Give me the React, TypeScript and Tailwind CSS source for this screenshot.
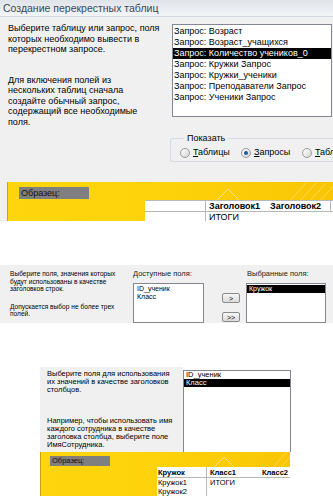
import React from 'react';

const queries = [
  'Запрос: Возраст',
  'Запрос: Возраст_учащихся',
  'Запрос: Количество учеников_0',
  'Запрос: Кружки Запрос',
  'Запрос: Кружки_ученики',
  'Запрос: Преподаватели Запрос',
  'Запрос: Ученики Запрос',
];

const Radio: React.FC<{ checked?: boolean; accel: string; rest: string }> = ({ checked, accel, rest }) => (
  <div className="flex w-[61px] shrink-0 items-center gap-[3px]">
    <span className="flex h-[10px] w-[10px] shrink-0 items-center justify-center rounded-full border border-[#9a9a9a] bg-gradient-to-br from-[#ffffff] to-[#d6d6d6]">
      {checked && <span className="h-[4px] w-[4px] rounded-full bg-[#1f5aa6]" />}
    </span>
    <span className="whitespace-nowrap">
      <span className="underline">{accel}</span>
      {rest}
    </span>
  </div>
);

const Decor: React.FC<{ x: number; y: number; s: number }> = ({ x, y, s }) => (
  <svg className="pointer-events-none absolute inset-0 h-full w-full" preserveAspectRatio="none">
    <polyline
      points={`${x - 14 * s},${y + 14 * s} ${x},${y} ${x + 14 * s},${y + 14 * s}`}
      fill="none"
      stroke="#fff"
      strokeOpacity="0.45"
      strokeWidth="1"
    />
    <line x1={x + 60 * s} y1={y + 14 * s} x2={x + 78 * s} y2={y - 6 * s} stroke="#fff" strokeOpacity="0.3" />
    <line x1={x + 70 * s} y1={y + 14 * s} x2={x + 88 * s} y2={y - 6 * s} stroke="#fff" strokeOpacity="0.3" />
    <line x1={x + 80 * s} y1={y + 14 * s} x2={x + 98 * s} y2={y - 6 * s} stroke="#fff" strokeOpacity="0.3" />
    <line x1={x + 90 * s} y1={y + 14 * s} x2={x + 108 * s} y2={y - 6 * s} stroke="#fff" strokeOpacity="0.3" />
  </svg>
);

export default function App() {
  return (
    <div className="flex h-[496px] w-[333px] flex-col overflow-hidden bg-white font-['Liberation_Sans','DejaVu_Sans',sans-serif] text-black">
      {/* Wizard 1: choose table or query */}
      <section className="flex h-[221px] shrink-0 flex-col overflow-hidden bg-[#f0f0f0]">
        <div className="h-[17px] shrink-0 border-b border-[#d3d9e0] bg-gradient-to-b from-[#dfe4ea] to-[#f3f5f7] pl-[3px] text-[10.5px] leading-[16px] text-[#3a4858]">
          Создание перекрестных таблиц
        </div>
        <div className="flex">
          <div className="w-[172px] shrink-0 pl-[8px] pt-[6px] text-[9px] leading-[10.5px]">
            <p>
              Выберите таблицу или запрос, поля
              <br />
              которых необходимо вывести в
              <br />
              перекрестном запросе.
            </p>
            <p className="mt-[20px]">
              Для включения полей из
              <br />
              нескольких таблиц сначала
              <br />
              создайте обычный запрос,
              <br />
              содержащий все необходимые
              <br />
              поля.
            </p>
          </div>
          <ul className="mt-[7px] h-[93px] w-[160px] shrink-0 border border-[#828790] bg-white pt-[1px] text-[9px] leading-[11px]">
            {queries.map((q, i) => (
              <li key={q} className={`whitespace-nowrap pl-[1px] ${i === 2 ? 'bg-black text-white' : ''}`}>
                {q}
              </li>
            ))}
          </ul>
        </div>
        <fieldset className="ml-[170px] mt-[6px] rounded-l-[3px] border border-r-0 border-[#d5dbe0] pb-[3px] pl-[9px] pt-[3px] text-[9px] leading-[11px]">
          <legend className="ml-[4px] px-[3px] text-[9px] leading-[11px]">Показать</legend>
          <div className="flex">
            <Radio accel="Т" rest="аблицы" />
            <Radio checked accel="З" rest="апросы" />
            <Radio accel="Т" rest="абл" />
          </div>
        </fieldset>
        <div className="relative ml-[7px] mt-[20px] flex h-[49px] flex-col border-l border-[#c9a21a] bg-gradient-to-r from-[#ffd60d] via-[#fdd20a] to-[#f9c505]">
          <Decor x={220} y={7} s={1} />
          <div className="relative ml-[11px] mt-[5px] h-[12px] w-[70px] bg-[#7f7f7f] pl-[2px] text-[9px] leading-[12px] text-[#111]">
            Образец:
          </div>
          <div className="relative ml-[137px] mt-[1px] flex-1 border-t border-[#b8b8b8] bg-white text-[9px] leading-[10px]">
            <div className="flex h-[11px] border-b border-[#b8b8b8]">
              <div className="w-[61px] shrink-0 border-r border-[#b8b8b8]" />
              <div className="w-[62px] shrink-0 pl-[3px] font-bold">Заголовок1</div>
              <div className="w-[63px] shrink-0 border-r border-[#b8b8b8] pl-[2px] font-bold">Заголовок2</div>
            </div>
            <div className="flex h-[11px] border-b border-[#e0e0e0]">
              <div className="w-[61px] shrink-0 border-r border-[#b8b8b8]" />
              <div className="pl-[3px]">ИТОГИ</div>
            </div>
            <div className="flex h-[10px]">
              <div className="w-[61px] shrink-0 border-r border-[#b8b8b8]" />
            </div>
          </div>
        </div>
      </section>

      {/* Wizard 2: row headings */}
      <section className="mt-[44px] flex h-[58px] shrink-0 overflow-hidden bg-[#f0f0f0] text-[6.6px] leading-[7.5px]">
        <div className="w-[133px] shrink-0 pl-[10px] pt-[5px]">
          <p>
            Выберите поля, значения которых
            <br />
            будут использованы в качестве
            <br />
            заголовков строк.
          </p>
          <p className="mt-[10px]">
            Допускается выбор не более трех
            <br />
            полей.
          </p>
        </div>
        <div className="flex w-[71px] shrink-0 flex-col pt-[4px]">
          <div className="text-[7.5px] leading-[9px] text-[#222]">Доступные поля:</div>
          <ul className="mt-[5px] flex-1 border border-[#828790] bg-white pl-[3px] pt-[1px] text-[7px] leading-[8px]">
            <li>ID_ученик</li>
            <li>Класс</li>
          </ul>
        </div>
        <div className="ml-[18px] flex w-[18px] shrink-0 flex-col pt-[28px]">
          <button className="flex h-[10px] items-center justify-center rounded-[2px] border border-[#8a8a8a] bg-gradient-to-b from-[#f6f6f6] to-[#dcdcdc] text-[7px] leading-none">
            &gt;
          </button>
          <button className="mt-[9px] flex h-[10px] items-center justify-center rounded-[2px] border border-[#8a8a8a] bg-gradient-to-b from-[#f6f6f6] to-[#dcdcdc] text-[7px] leading-none">
            &gt;&gt;
          </button>
        </div>
        <div className="ml-[6px] flex w-[80px] shrink-0 flex-col pt-[4px]">
          <div className="pl-[1px] text-[7.5px] leading-[9px] text-[#222]">Выбранные поля:</div>
          <ul className="mt-[5px] flex-1 border border-[#828790] bg-white pt-[1px] text-[7px] leading-[8px]">
            <li className="bg-black pl-[2px] text-white">Кружок</li>
          </ul>
        </div>
      </section>

      {/* Wizard 3: column headings */}
      <section className="ml-[40px] mt-[44px] flex w-[251px] shrink-0 flex-col text-[7.5px] leading-[8px]">
        <div className="flex h-[85px]">
          <div className="w-[143px] shrink-0 bg-[#f0f0f0] pl-[7px] pt-[3px]">
            <p>
              Выберите поля для использования
              <br />
              их значений в качестве заголовков
              <br />
              столбцов.
            </p>
            <p className="mt-[23px]">
              Например, чтобы использовать имя
              <br />
              каждого сотрудника в качестве
              <br />
              заголовка столбца, выберите поле
              <br />
              ИмяСотрудника.
            </p>
          </div>
          <ul className="mt-[3px] h-[82px] w-[108px] shrink-0 border border-b-0 border-[#828790] bg-white">
            <li className="pl-[2px]">ID_ученик</li>
            <li className="bg-black pl-[2px] text-white">Класс</li>
          </ul>
        </div>
        <div className="relative flex h-[44px] w-[250px] flex-col border-l border-[#c9a21a] bg-gradient-to-r from-[#ffd60d] via-[#fdd20a] to-[#f9c505]">
          <Decor x={183} y={5} s={0.8} />
          <div className="relative ml-[9px] mt-[4px] h-[10px] w-[60px] bg-[#7f7f7f] pl-[2px] leading-[10px] text-[#111]">
            Образец:
          </div>
          <div className="relative ml-[116px] mt-[1px] flex-1 bg-white">
            <div className="flex h-[11px] border-b border-[#b8b8b8] font-bold leading-[11px]">
              <div className="w-[50px] shrink-0 border-r border-[#b8b8b8] pl-[1px]">Кружок</div>
              <div className="w-[52px] shrink-0 pl-[3px]">Класс1</div>
              <div className="pl-[3px]">Класс2</div>
            </div>
            <div className="flex h-[9px] leading-[9px]">
              <div className="w-[50px] shrink-0 border-r border-[#b8b8b8] pl-[1px]">Кружок1</div>
              <div className="pl-[3px]">ИТОГИ</div>
            </div>
            <div className="flex h-[9px] leading-[9px]">
              <div className="w-[50px] shrink-0 border-r border-[#b8b8b8] pl-[1px]">Кружок2</div>
            </div>
          </div>
        </div>
      </section>
    </div>
  );
}
